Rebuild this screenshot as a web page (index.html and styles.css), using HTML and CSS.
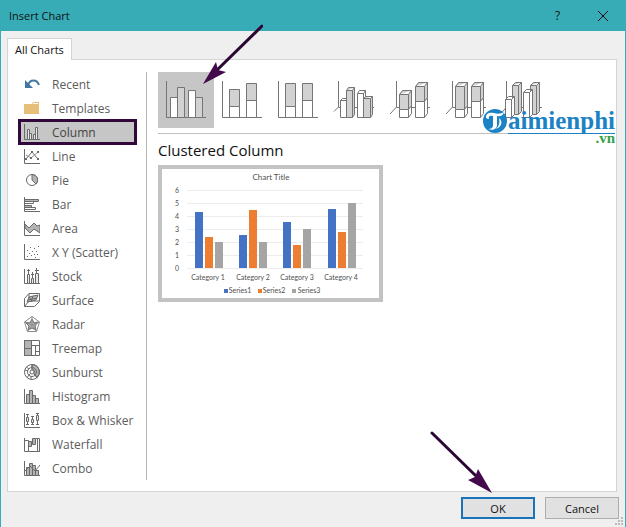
FILE: index.html
```html
<!doctype html>
<html lang="en">
<head>
    <meta charset="utf-8">
    <title>Insert Chart</title>
    <meta name="viewport" content="width=device-width, initial-scale=1">
    <link rel="stylesheet" href="styles.css">
</head>
<body>
    <div class="dialog">
        <header class="title-bar">
            <h1>Insert Chart</h1>
            <button class="title-button" type="button">?</button>
            <button class="title-button" type="button" aria-label="Close">
                <svg width="12" height="12" viewBox="0 0 12 12"><path d="M1 1l10 10M11 1L1 11" /></svg>
            </button>
        </header>
        <div class="tabs">
            <button class="tab" type="button">All Charts</button>
        </div>
        <main class="panel">
            <nav class="categories">
                <button type="button">
                    <svg class="icon recent" viewBox="0 0 16 16"><path class="head" d="M1 4l3 3 5 5H1z" /><path class="arc" d="M4 9C6 3 13 3 15 9" /></svg>
                    Recent
                </button>
                <button type="button">
                    <svg class="icon folder" viewBox="0 0 16 16"><path d="M0 4h8l1-2h6v12H0z" /><path class="flap" d="M9 3.5h5" /></svg>
                    Templates
                </button>
                <button type="button" class="selected">
                    <svg class="icon" viewBox="0 0 16 16"><path d="M.5 0v15.500H16" /><path class="light" d="M3.500 15.500v-10h2v10zM5.500 15.500v-6h2v6zM9.500 15.500v-5h2v5zM11.500 15.500v-12h2v12z" /></svg>
                    Column
                </button>
                <button type="button">
                    <svg class="icon" viewBox="0 0 16 16"><path d="M.5 1v14.500H16" /><path d="M2 11l6-7 6 7" /><path class="thin" d="M2 7l5 3 7-6" /><path class="dark" d="M1 10h2v2H1zM7 3h2v2H7zM13 10h2v2h-2zM6 9h2v2H6zM13 3h2v2h-2z" /></svg>
                    Line
                </button>
                <button type="button">
                    <svg class="icon" viewBox="0 0 16 16"><circle cx="8" cy="8" r="5.500" /><path class="fill" d="M8 2.500V8l4 4A5.500 5.500 0 0 0 8 2.500z" /></svg>
                    Pie
                </button>
                <button type="button">
                    <svg class="icon" viewBox="0 0 16 16"><path d="M.5 1v14.500H16" /><path class="fill" d="M.5 3.500h14v2H.5zM.5 9.500h7v2H.5z" /><path d="M.5 5.500h9v2H.5zM.5 11.500h11v2H.5z" /></svg>
                    Bar
                </button>
                <button type="button">
                    <svg class="icon" viewBox="0 0 16 16"><path class="fill" d="M1 4l4 4 5-5 3 3 3-1v8l-3-2-3-2-4 4-5-5z" /><path d="M.5 1v14.500H16" /></svg>
                    Area
                </button>
                <button type="button">
                    <svg class="icon" viewBox="0 0 16 16"><path d="M.5 0v15.500H16" /><path d="M3 6.500h1M6 3.500h1M10 4.500h1M14 2.500h1M5 9.500h1M8 7.500h1M12 7.500h1M3 12.500h1M7 11.500h1M10 10.500h1M13 10.500h1M11 13.500h1" /></svg>
                    X Y (Scatter)
                </button>
                <button type="button">
                    <svg class="icon" viewBox="0 0 16 16"><path d="M.5 1v14.500H16M4.500 1v5M8.500 4v6M12.500 0v5M3 2.500h3M7 6.500h3M11 2.500h4" /><path class="light" d="M3.500 15.500v-9h2v9zM7.500 15.500v-5h2v5zM11.500 15.500v-10h3v10z" /></svg>
                    Stock
                </button>
                <button type="button">
                    <svg class="icon" viewBox="0 0 16 16"><path d="M.5 6.500L5 1.500h10.500v8l-5 5H.5zM.5 14.500L5 9h10.500M5 1.500V9" /><path class="fill" d="M3 10l2-5 4-1 5-1-2 5-4 1z" /><path d="M5 5l3 4M9 4l-2 6M4 8l9-2" /></svg>
                    Surface
                </button>
                <button type="button">
                    <svg class="icon" viewBox="0 0 16 16"><path class="thin" d="M8 .5l7.500 5.500-3 9.500h-9L.5 6z" /><path class="fill" d="M8 3l2 4 4-1-3 4 1 4-4-2-4 2 1-4-4-4 5 1z" /><path class="thin" d="M8 .5V9M15.500 6L8 9M12.500 15.500L8 9M3.500 15.500L8 9M.5 6L8 9" /></svg>
                    Radar
                </button>
                <button type="button">
                    <svg class="icon" viewBox="0 0 16 16"><path class="fill" d="M.5.5h7v15h-7z" /><path d="M.5.5h15v15H.5zM.5 8.500h7M7.500 5.500h8M11.500 5.500v10M11.500 11.500h4" /></svg>
                    Treemap
                </button>
                <button type="button">
                    <svg class="icon" viewBox="0 0 16 16"><path class="fill" d="M8 .5A7.500 7.500 0 0 1 13 13.500L10 10A3 3 0 0 0 8 5z" /><circle cx="8" cy="8" r="7.500" /><circle cx="8" cy="8" r="4.500" /><circle cx="8" cy="8" r="2" /><path d="M8 .5V6M1 6l3 1M3 13.500L6 10M7 15.500V12M2.500 3L5 5M10 10l3 3.500" /></svg>
                    Sunburst
                </button>
                <button type="button">
                    <svg class="icon" viewBox="0 0 16 16"><path d="M.5 1v14.500H16" /><path class="fill" d="M2.500 15.500v-9h3v9zM5.500 15.500v-13h3v13zM8.500 15.500v-8h3v8zM11.500 15.500v-5h3v5z" /></svg>
                    Histogram
                </button>
                <button type="button">
                    <svg class="icon" viewBox="0 0 16 16"><path d="M.5 1v14.500H16M3.500 2v11M8.500 4v9M13.500 1v12M2 2.500h3M2 12.500h3M7 4.500h3M7 12.500h3M12 1.500h3M12 12.500h3" /><path class="light" d="M2.500 5.500h2v4h-2zM7.500 7.500h2v3h-2zM12.500 3.500h2v5h-2z" /></svg>
                    Box &amp; Whisker
                </button>
                <button type="button">
                    <svg class="icon" viewBox="0 0 16 16"><path d="M.5 2v13.500H16" /><path d="M.5 4.500h4v11M11.500 2.500h4v13M13.500 2.500v13" /><path class="fill" d="M4.500 5.500h3v5h-3zM8.500 2.500h3v6h-3z" /></svg>
                    Waterfall
                </button>
                <button type="button">
                    <svg class="icon" viewBox="0 0 16 16"><path d="M.5 1v14.500H16" /><path class="fill" d="M2.500 15.500v-8h3v8zM5.500 15.500v-12h3v12zM8.500 15.500v-10h3v10zM11.500 15.500v-5h3v5z" /><path d="M1 11l5-5 5 5 5-6" /></svg>
                    Combo
                </button>
            </nav>
            <section class="chart-view">
                <div class="types">
                    <button type="button" class="type selected" aria-label="Clustered Column">
                        <svg viewBox="0 0 56 56"><path d="M8.500 9v36.500H48" /><path class="white" d="M12.500 45.500v-20h7v20zM30.500 45.500v-27h7v27z" /><path class="gray" d="M19.500 45.500v-30h7v30zM37.500 45.500v-20h7v20z" /></svg>
                    </button>
                    <button type="button" class="type" aria-label="Stacked Column">
                        <svg viewBox="0 0 56 56"><path d="M8.500 9v36.500H48" /><path class="white" d="M15.500 45.500v-11h10v11zM32.500 45.500v-17h10v17z" /><path class="gray" d="M15.500 34.500v-17h10v17zM32.500 28.500v-17h10v17z" /></svg>
                    </button>
                    <button type="button" class="type" aria-label="100% Stacked Column">
                        <svg viewBox="0 0 56 56"><path d="M8.500 9v36.500H48" /><path class="white" d="M15.500 45.500v-11h10v11zM32.500 45.500v-17h10v17z" /><path class="gray" d="M15.500 34.500v-23h10v23zM32.500 28.500v-17h10v17z" /></svg>
                    </button>
                    <button type="button" class="type" aria-label="3-D Clustered Column">
                        <svg viewBox="0 0 56 56"><path d="M12.500 9v26L8 39.500M12.500 35.500H48" /><path class="white" d="M14.500 45.500v-17l2-2h6v19zM31.500 45.500v-24l2-3h6v27zM14.500 28.500h6M31.500 21.500h6l2-3M37.500 21.500v24" /><path class="gray" d="M20.500 45.500v-27l2-3h6v27l-2 3zM20.500 18.500h6l2-3M26.500 18.500v27M37.500 45.500v-19l2-2h7v18l-2 3zM37.500 26.500h7l2-2M44.500 26.500v19" /></svg>
                    </button>
                    <button type="button" class="type" aria-label="3-D Stacked Column">
                        <svg viewBox="0 0 56 56"><path d="M14.500 9v26L8 42M14.500 35.500H48" /><path class="white" d="M17.500 45.500v-8l3-4h9v8l-3 4zM26.500 37.500v8M33.500 45.500v-16l3-4h9v16l-3 4zM42.500 29.500v16" /><path class="gray" d="M17.500 37.500v-15l3-4h9v15l-3 4zM17.500 22.500h9l3-4M26.500 22.500v15M33.500 29.500v-15l3-4h9v15l-3 4zM33.500 14.500h9l3-4M42.500 14.500v15" /></svg>
                    </button>
                    <button type="button" class="type" aria-label="3-D 100% Stacked Column">
                        <svg viewBox="0 0 56 56"><path d="M14.500 9v26L8 42M14.500 35.500H48" /><path class="white" d="M17.500 45.500v-8l3-4h9v8l-3 4zM26.500 37.500v8M33.500 45.500v-16l3-4h9v16l-3 4zM42.500 29.500v16" /><path class="gray" d="M17.500 37.500v-23l3-4h9v23l-3 4zM17.500 14.500h9l3-4M26.500 14.500v23M33.500 29.500v-15l3-4h9v15l-3 4zM33.500 14.500h9l3-4M42.500 14.500v15" /></svg>
                    </button>
                    <button type="button" class="type" aria-label="3-D Column">
                        <svg viewBox="0 0 56 56"><path d="M12.500 9v26L5 44M12.500 35.500H48" /><path class="gray" d="M18.500 42.500v-29l3-3h6v29l-3 3zM18.500 13.500h6l3-3M24.500 13.500v29M36.500 42.500v-29l3-3h6v29l-3 3zM36.500 13.500h6l3-3M42.500 13.500v29" /><path class="white" d="M11.500 45.500v-18l3-3h6v18l-3 3zM11.500 27.500h6l3-3M17.500 27.500v18M29.500 45.500v-25l3-3h6v25l-3 3zM29.500 20.500h6l3-3M35.500 20.500v25" /></svg>
                    </button>
                    <svg class="pointer pointer-type" width="60" height="60" viewBox="0 0 60 60"><path class="shaft" d="M59 2L13 47" /><path class="tip" d="M0 60l13-22 2 8 8 2z" /></svg>
                    <div class="watermark">
                        <svg width="26" height="26" viewBox="0 0 26 26"><circle cx="13" cy="13" r="12" /><path class="letter" d="M4 9c0-4 4-5 8-4 4 1 7 1 10-1-1 4-4 5-7 4v9c0 4-4 6-9 4 3 0 5-1 5-4V8C8 7 6 8 7 11c-2 0-3-1-3-2z" /><path class="letter" d="M17 10c4 3 3 9-3 11 3-3 4-6 3-11z" /></svg>
                        <span class="name">aimienphi</span>
                        <span class="suffix">.vn</span>
                    </div>
                </div>
                <h2>Clustered Column</h2>
                <button type="button" class="preview" aria-label="Clustered Column preview">
                    <svg viewBox="0 0 217 129">
                        <path class="grid" d="M25 21.500h176M25 34.500h176M25 47.500h176M25 60.500h176M25 73.500h176M25 86.500h176M25 99.500h176" />
                        <path class="series1" d="M33 99V43h8v56zM77 99V66h8v33zM121 99V53h8v46zM166 99V40h8v59z" />
                        <path class="series2" d="M43 99V68h8v31zM87 99V41h8v58zM131 99V76h8v23zM176 99V63h8v36z" />
                        <path class="series3" d="M53 99V73h8v26zM97 99V73h8v26zM141 99V60h8v39zM186 99V34h8v65z" />
                        <text class="chart-title" x="109" y="11">Chart Title</text>
                        <text x="15" y="24">6</text>
                        <text x="15" y="37">5</text>
                        <text x="15" y="50">4</text>
                        <text x="15" y="63">3</text>
                        <text x="15" y="76">2</text>
                        <text x="15" y="89">1</text>
                        <text x="15" y="102">0</text>
                        <text x="46" y="111">Category 1</text>
                        <text x="91" y="111">Category 2</text>
                        <text x="135" y="111">Category 3</text>
                        <text x="179" y="111">Category 4</text>
                        <path class="series1" d="M62 120h4v4h-4z" />
                        <text x="78" y="124">Series1</text>
                        <path class="series2" d="M96 120h4v4h-4z" />
                        <text x="112" y="124">Series2</text>
                        <path class="series3" d="M130 120h4v4h-4z" />
                        <text x="147" y="124">Series3</text>
                    </svg>
                </button>
            </section>
        </main>
        <footer class="actions">
            <button type="button" class="primary">OK</button>
            <button type="button">Cancel</button>
            <svg class="pointer pointer-ok" width="62" height="62" viewBox="0 0 62 62"><path class="shaft" d="M2 2l44 43" /><path class="tip" d="M62 62L38 49l7-3 3-8z" /></svg>
            <svg class="grip" width="8" height="8" viewBox="0 0 8 8"><path d="M6 0h2v2H6zM3 3h2v2H3zM6 3h2v2H6zM0 6h2v2H0zM3 6h2v2H3zM6 6h2v2H6z" /></svg>
        </footer>
    </div>
</body>
</html>
```
FILE: styles.css
```css
* {
    box-sizing: border-box;
}
body {
    margin: 0;
    font-family: "Open Sans", "Noto Sans", sans-serif;
    font-size: 11px;
    color: #111;
}
button {
    font: inherit;
    color: inherit;
    padding: 0;
    border: none;
    background: none;
}
svg {
    display: block;
}
.dialog {
    display: flex;
    flex-direction: column;
    min-height: 100vh;
    background-color: #efefef;
    border: 1px solid #38acb6;
    border-top: none;
}
.title-bar {
    display: flex;
    align-items: center;
    height: 31px;
    padding-left: 8px;
    background-color: #38acb6;
}
.title-bar h1 {
    flex: 1;
    margin: 0;
    font-size: 11px;
    font-weight: normal;
}
.title-button {
    display: flex;
    justify-content: center;
    align-items: center;
    width: 45px;
    height: 31px;
    font-size: 12px;
}
.title-button path {
    stroke: #111;
    fill: none;
}
.tabs {
    display: flex;
    padding: 7px 6px 0;
}
.tab {
    position: relative;
    height: 22px;
    margin-bottom: -1px;
    padding: 0 7px;
    border: 1px solid #d4d4d4;
    border-bottom: none;
    background-color: #fff;
}
.panel {
    flex: 1;
    display: flex;
    margin: 0 8px 0 6px;
    padding: 12px 10px 11px;
    border: 1px solid #d4d4d4;
    background-color: #fff;
}
.categories {
    display: flex;
    flex-direction: column;
    flex: none;
    width: 129px;
    padding-right: 9px;
    border-right: 1px solid #b4b4b4;
}
.categories button {
    display: flex;
    align-items: center;
    gap: 12px;
    height: 24px;
    padding-left: 6px;
    font-size: 12px;
    white-space: nowrap;
    color: #5c5c5c;
}
.categories .selected {
    height: 26px;
    margin: -1px 0;
    padding-left: 3px;
    border: 3px solid #32083c;
    background-color: #c6c6c6;
    color: #444;
}
.icon {
    width: 16px;
    height: 16px;
    fill: none;
    stroke: #6a6a6a;
}
.icon .light {
    fill: #e8e8e8;
}
.icon .fill {
    fill: #b4b4b4;
}
.icon .dark {
    fill: #6a6a6a;
    stroke: none;
}
.icon .thin {
    stroke: #8c8c8c;
}
.recent .head {
    fill: #4377a3;
    stroke: none;
}
.recent .arc {
    stroke: #4377a3;
    stroke-width: 2;
}
.folder {
    fill: #e6bf7a;
    stroke: none;
}
.folder .flap {
    stroke: #fff;
}
.chart-view {
    flex: 1;
    min-width: 0;
    padding-left: 11px;
}
.types {
    position: relative;
    display: flex;
    padding-bottom: 5px;
    border-bottom: 1px solid #c0c0c0;
}
.type {
    width: 56px;
    height: 56px;
}
.type.selected {
    background-color: #c6c6c6;
}
.type svg {
    fill: none;
    stroke: #757575;
}
.type .white {
    fill: #fff;
}
.type .gray {
    fill: #d2d2d2;
}
.chart-view h2 {
    margin: 5px 0 4px;
    font-size: 15px;
    font-weight: normal;
    line-height: 22px;
}
.preview {
    display: block;
    width: 225px;
    border: 4px solid #c3c3c3;
    background-color: #fff;
}
.preview text {
    font-family: Lato, sans-serif;
    font-size: 7px;
    text-anchor: middle;
    fill: #505050;
}
.preview .chart-title {
    font-size: 8px;
}
.grid {
    stroke: #ececec;
}
.series1 {
    fill: #4472c4;
}
.series2 {
    fill: #ed7d31;
}
.series3 {
    fill: #a5a5a5;
}
.actions {
    position: relative;
    display: flex;
    justify-content: flex-end;
    gap: 10px;
    padding: 5px 6px 8px;
}
.actions button {
    width: 74px;
    height: 22px;
    border: 1px solid #adadad;
    background-color: #e1e1e1;
}
.actions .primary {
    border: 2px solid #1a72b8;
}
.grip {
    position: absolute;
    right: 2px;
    bottom: 2px;
    fill: #bcbcbc;
}
/* pointers and watermark lie over the dialog */
.pointer {
    position: absolute;
    pointer-events: none;
}
.pointer .shaft {
    stroke: #2b0733;
    stroke-width: 3;
    stroke-linecap: round;
}
.pointer .tip {
    fill: #430a4c;
}
.pointer-type {
    left: 45px;
    top: -48px;
}
.pointer-ok {
    right: 133px;
    bottom: 34px;
}
.watermark {
    position: absolute;
    right: -9px;
    top: 36px;
    display: grid;
    grid-template-columns: 26px auto;
    font-family: "Liberation Serif", serif;
    font-weight: bold;
    color: #1b83c5;
}
.watermark circle {
    fill: #1b83c5;
}
.watermark .letter {
    fill: #fff;
}
.watermark .name {
    font-size: 25px;
    line-height: 25px;
    border-bottom: 1px solid #1b83c5;
}
.watermark .suffix {
    grid-column: 2;
    justify-self: end;
    font-size: 15px;
    line-height: 8px;
    color: #36a04a;
}
```
